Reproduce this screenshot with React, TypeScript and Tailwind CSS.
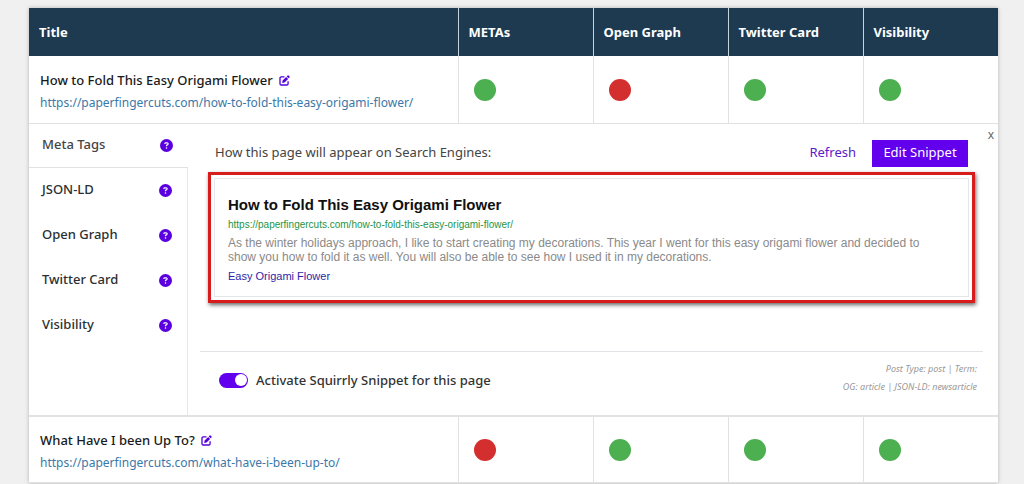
import { FaCircleQuestion } from 'react-icons/fa6';

type Status = 'good' | 'bad';

const columns = ['METAs', 'Open Graph', 'Twitter Card', 'Visibility'];
const tabs = ['Meta Tags', 'JSON-LD', 'Open Graph', 'Twitter Card', 'Visibility'];

function EditIcon() {
  return (
    <svg viewBox="0 0 20 20" className="size-[11px]" aria-hidden="true">
      <path
        d="M10 3.5H4A2.2 2.2 0 0 0 1.8 5.7V16A2.2 2.2 0 0 0 4 18.2h10.3a2.2 2.2 0 0 0 2.2-2.2v-4.5"
        fill="none"
        stroke="currentColor"
        strokeWidth="2.4"
      />
      <path d="M5.8 14.4l.7-4.2 6.6-6.6 3.5 3.5-6.6 6.6zM14.1 2.6l1.5-1.5a1.3 1.3 0 0 1 1.8 0l1.7 1.7a1.3 1.3 0 0 1 0 1.8l-1.5 1.5z" fill="currentColor" />
    </svg>
  );
}

function PageRow({ title, url, statuses }: { title: string; url: string; statuses: Status[] }) {
  return (
    <tr className="h-[67px] border-b border-[#dfe1e3]">
      <td className="px-[11px] pt-1">
        <div className="flex items-center gap-[6px] text-[13px] leading-6 font-medium text-[#1a1a1a]">
          {title}
          <button type="button" aria-label={`Edit ${title}`} className="text-[#5200dc]">
            <EditIcon />
          </button>
        </div>
        <a href={url} className="block text-xs leading-[22px] text-[#3b78a8]">{url}</a>
      </td>
      {statuses.map((status, i) => (
        <td key={i} className="border-l border-[#dfe1e3] px-[15px] pt-[2px]">
          <span
            role="img"
            aria-label={status}
            className={`block size-[22px] rounded-full ${status === 'good' ? 'bg-[#4caf50]' : 'bg-[#d32f2f]'}`}
          />
        </td>
      ))}
    </tr>
  );
}

function Sidebar() {
  return (
    <nav className="flex w-[159px] shrink-0 flex-col">
      {tabs.map((tab, i) => (
        <div
          key={tab}
          className={`flex items-center justify-between pr-[15px] pl-[13px] ${
            i === 0 ? 'h-11 border-b border-[#dfe1e3] text-[#444]' : 'h-[45px] border-r border-r-[#e5e7e9] text-[#2b2f33]'
          }`}
        >
          <button type="button" className="text-[13px] font-medium">{tab}</button>
          <FaCircleQuestion className="size-[13px] text-[#5a00e0]" />
        </div>
      ))}
      <div className="grow border-r border-[#e5e7e9]" />
    </nav>
  );
}

function SnippetPreview() {
  return (
    <div className="mx-2 border-3 border-[#d81b1b] p-[3px] shadow-[1px_2px_4px_rgba(0,0,0,0.6)]">
      <div className="h-[119px] border border-[#e3e6e8] px-[13px] pt-[17px] font-['Liberation_Sans',Arial,sans-serif]">
        <h3 className="text-[15px] leading-[18px] font-bold text-[#111]">How to Fold This Easy Origami Flower</h3>
        <p className="text-[10px] leading-[22px] text-[#1e9446]">
          https://paperfingercuts.com/how-to-fold-this-easy-origami-flower/
        </p>
        <p className="max-w-[720px] text-xs leading-[14px] text-[#8a8a8a]">
          As the winter holidays approach, I like to start creating my decorations. This year I went for this easy
          origami flower and decided to show you how to fold it as well. You will also be able to see how I used it in
          my decorations.
        </p>
        <a href="#flower" className="block text-[11px] leading-6 text-[#2d1fa8]">Easy Origami Flower</a>
      </div>
    </div>
  );
}

function SnippetPanel() {
  return (
    <div className="flex min-h-[291px]">
      <Sidebar />
      <div className="flex grow flex-col pr-[15px] pl-3">
        <div className="flex items-center justify-between pt-4 pr-[15px] pb-[5px] pl-[15px]">
          <p className="text-[13px] text-[#444]">How this page will appear on Search Engines:</p>
          <div className="flex items-center gap-4">
            <button type="button" className="text-[13px] text-[#5b21c9]">Refresh</button>
            <button type="button" className="h-[27px] w-24 bg-[#6200ee] text-[13px] text-white">Edit Snippet</button>
          </div>
        </div>
        <SnippetPreview />
        <div className="mt-12 flex items-start justify-between border-t border-[#e1e3e6] pt-2 pr-[6px] pl-[19px]">
          <label className="flex items-center gap-2 pt-[11px] text-[13px] font-medium text-[#333]">
            <input
              type="checkbox"
              defaultChecked
              className="flex h-[15px] w-[29px] appearance-none items-center rounded-full bg-gray-400 px-px before:size-[12px] before:rounded-full before:bg-white checked:justify-end checked:bg-[#6200ee]"
            />
            Activate Squirrly Snippet for this page
          </label>
          <p className="text-right text-[9px] leading-[18px] text-[#999] italic">
            Post Type: post | Term:
            <br />
            OG: article | JSON-LD: newsarticle
          </p>
        </div>
      </div>
    </div>
  );
}

export default function App() {
  return (
    <main className="min-h-screen bg-[#f0f0f0] pt-2 pr-[26px] pl-[29px] font-['Noto_Sans',sans-serif]">
      <table className="w-full table-fixed border-collapse bg-white shadow-[0_0_4px_rgba(0,0,0,0.25)]">
        <colgroup>
          <col />
          <col className="w-[135px]" />
          <col className="w-[135px]" />
          <col className="w-[135px]" />
          <col className="w-[135px]" />
        </colgroup>
        <thead>
          <tr className="h-12 bg-[#1d3a50] text-left text-[13px] text-white">
            <th className="px-[10px] pt-[2px] font-bold">Title</th>
            {columns.map((column) => (
              <th key={column} className="border-l border-[#c5d3dc] px-[10px] pt-[2px] font-bold">{column}</th>
            ))}
          </tr>
        </thead>
        <tbody>
          <PageRow
            title="How to Fold This Easy Origami Flower"
            url="https://paperfingercuts.com/how-to-fold-this-easy-origami-flower/"
            statuses={['good', 'bad', 'good', 'good']}
          />
          <tr className="border-b-2 border-[#e0e2e4]">
            <td colSpan={5} className="relative p-0">
              <SnippetPanel />
              <button
                type="button"
                aria-label="Close"
                className="absolute top-1 right-1 text-xs leading-[14px] text-[#666]"
              >
                x
              </button>
            </td>
          </tr>
          <PageRow
            title="What Have I been Up To?"
            url="https://paperfingercuts.com/what-have-i-been-up-to/"
            statuses={['bad', 'good', 'good', 'good']}
          />
        </tbody>
      </table>
    </main>
  );
}
